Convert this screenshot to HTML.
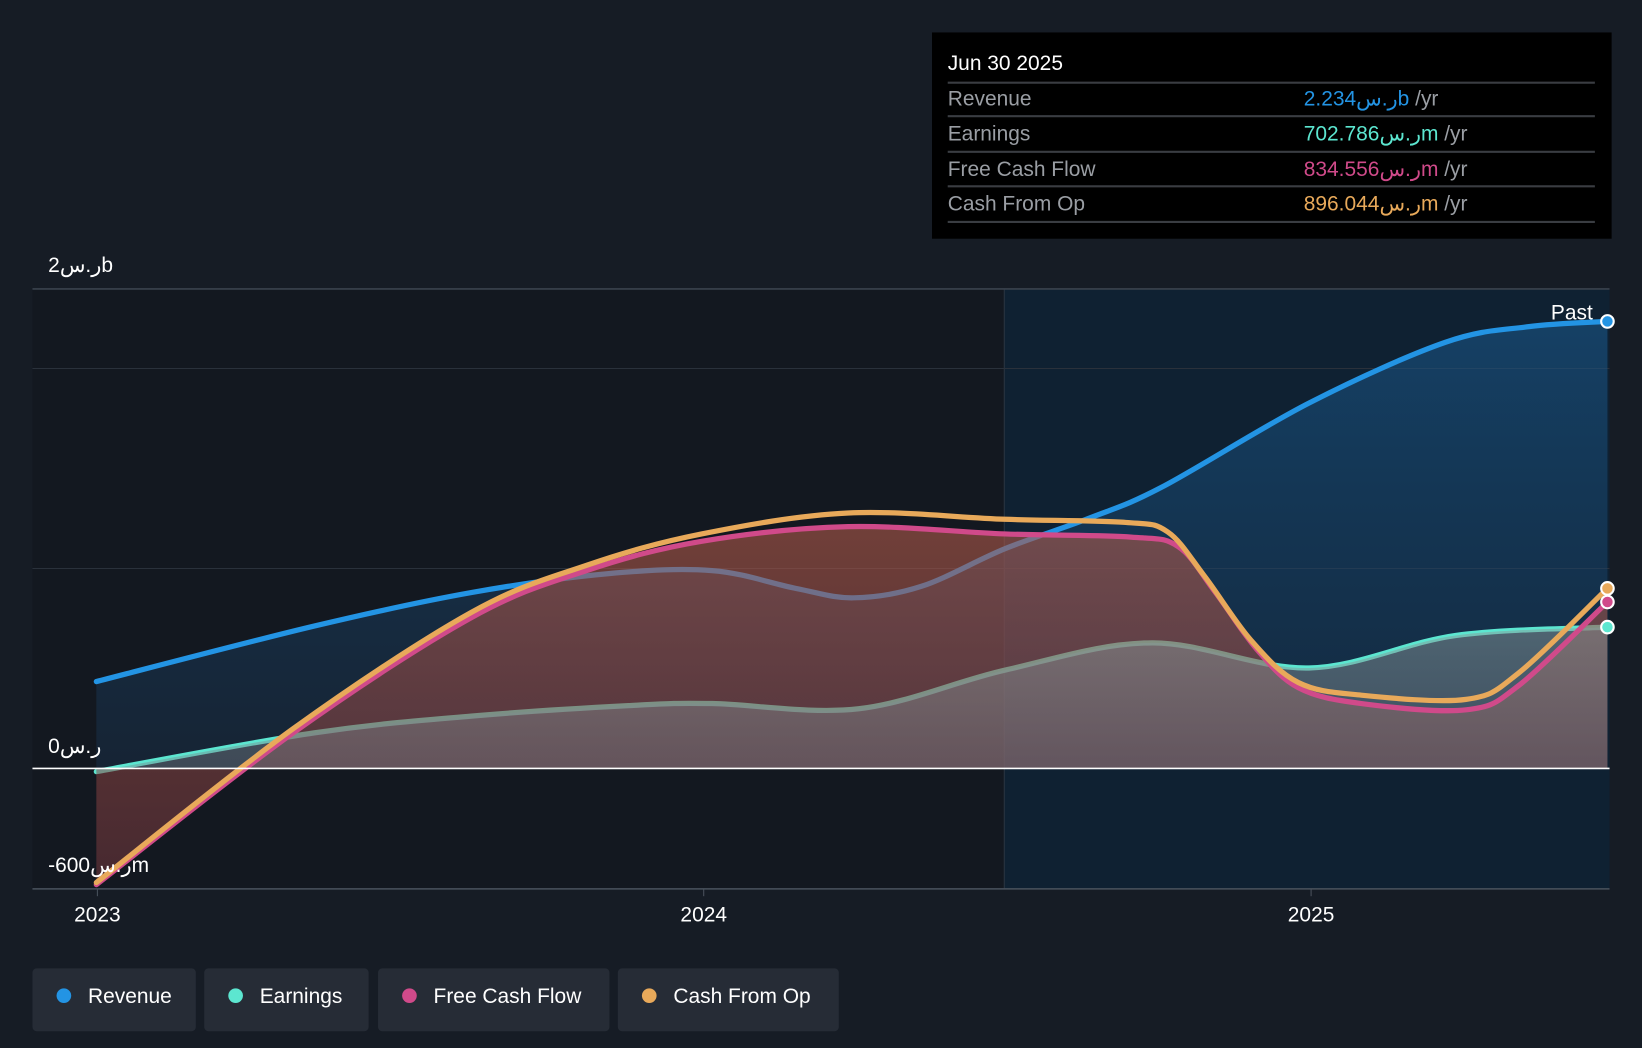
<!DOCTYPE html>
<html><head><meta charset="utf-8"><style>
html,body{margin:0;padding:0;background:#161c25;}
svg{display:block}
text{font-family:"Liberation Sans","Noto Sans CJK SC",sans-serif;}
</style></head><body>
<svg id="s" width="1642" height="1048" viewBox="0 0 1568 1001" preserveAspectRatio="none" xmlns="http://www.w3.org/2000/svg">
<defs>
<linearGradient id="rg" x1="0" y1="0" x2="0" y2="1"><stop offset="0" stop-color="#1a5a8f" stop-opacity="0.55"/><stop offset="1" stop-color="#1a3a5a" stop-opacity="0.35"/></linearGradient>
<linearGradient id="fg" x1="0" y1="0" x2="0" y2="1"><stop offset="0" stop-color="#b05a4a" stop-opacity="0.6"/><stop offset="1" stop-color="#7a3a40" stop-opacity="0.5"/></linearGradient>
<linearGradient id="eg" x1="0" y1="0" x2="0" y2="1"><stop offset="0" stop-color="#8a9a9a" stop-opacity="0.5"/><stop offset="1" stop-color="#7a8088" stop-opacity="0.4"/></linearGradient>
</defs>
<rect width="1568" height="1001" fill="#161c25"/>
<rect x="31" y="276" width="928" height="573" fill="#131820"/>
<rect x="959" y="276" width="578" height="573" fill="#0f2132"/>
<line x1="959" y1="276" x2="959" y2="849" stroke="#2a3440" stroke-width="1"/>
<line x1="31" y1="276" x2="1537" y2="276" stroke="#3a424d" stroke-width="1.5"/>
<line x1="31" y1="352" x2="1537" y2="352" stroke="#2a313b" stroke-width="1"/>
<line x1="31" y1="543" x2="1537" y2="543" stroke="#2a313b" stroke-width="1"/>
<g id="plot"></g>
<line x1="31" y1="734" x2="1537" y2="734" stroke="#ffffff" stroke-width="1.5"/>
<line x1="31" y1="849" x2="1537" y2="849" stroke="#4a525d" stroke-width="1.5"/>
<line x1="93" y1="849" x2="93" y2="856" stroke="#4a525d"/>
<line x1="672" y1="849" x2="672" y2="856" stroke="#4a525d"/>
<line x1="1252" y1="849" x2="1252" y2="856" stroke="#4a525d"/>
<g font-size="20" fill="#fff">
<text x="46" y="260">2ر.سb</text>
<text x="46" y="719">0ر.س</text>
<text x="46" y="833">-600ر.سm</text>
<text x="93" y="880" text-anchor="middle">2023</text>
<text x="672" y="880" text-anchor="middle">2024</text>
<text x="1252" y="880" text-anchor="middle">2025</text>
<text x="1521" y="305" text-anchor="end">Past</text>
</g>
<rect x="890" y="31" width="649" height="197" fill="#000"/>
<g stroke="#3a3d42" stroke-width="2"><line x1="905" y1="79" x2="1523" y2="79"/><line x1="905" y1="111" x2="1523" y2="111"/><line x1="905" y1="145" x2="1523" y2="145"/><line x1="905" y1="178" x2="1523" y2="178"/><line x1="905" y1="212" x2="1523" y2="212"/></g>
<g font-size="20">
<text x="905" y="67" fill="#fff">Jun 30 2025</text>
<text x="905" y="101" fill="#9a9ea4">Revenue</text>
<text x="905" y="134" fill="#9a9ea4">Earnings</text>
<text x="905" y="168" fill="#9a9ea4">Free Cash Flow</text>
<text x="905" y="201" fill="#9a9ea4">Cash From Op</text>
<text x="1245" y="101" fill="#2394e4">2.234ر.سb <tspan fill="#9a9ea4">/yr</tspan></text>
<text x="1245" y="134" fill="#5ce6d0">702.786ر.سm <tspan fill="#9a9ea4">/yr</tspan></text>
<text x="1245" y="168" fill="#d04a8a">834.556ر.سm <tspan fill="#9a9ea4">/yr</tspan></text>
<text x="1245" y="201" fill="#e8a95a">896.044ر.سm <tspan fill="#9a9ea4">/yr</tspan></text>
</g>
<g font-size="20" fill="#fff">
<rect x="31" y="925" width="156" height="60" rx="4" fill="#262c36"/><circle cx="61" cy="951" r="7" fill="#2394e4"/><text x="84" y="958">Revenue</text>
<rect x="195" y="925" width="157" height="60" rx="4" fill="#262c36"/><circle cx="225" cy="951" r="7" fill="#5ce6d0"/><text x="248" y="958">Earnings</text>
<rect x="361" y="925" width="221" height="60" rx="4" fill="#262c36"/><circle cx="391" cy="951" r="7" fill="#d04a8a"/><text x="414" y="958">Free Cash Flow</text>
<rect x="590" y="925" width="211" height="60" rx="4" fill="#262c36"/><circle cx="620" cy="951" r="7" fill="#e8a95a"/><text x="643" y="958">Cash From Op</text>
</g>
</svg>
<script>
function cr(p){var d="M"+p[0][0]+","+p[0][1];for(var i=0;i<p.length-1;i++){var a=p[i-1]||p[i],b=p[i],c=p[i+1],e=p[i+2]||c;var t=6;d+=" C"+(b[0]+(c[0]-a[0])/t)+","+(b[1]+(c[1]-a[1])/t)+" "+(c[0]-(e[0]-b[0])/t)+","+(c[1]-(e[1]-b[1])/t)+" "+c[0]+","+c[1];}return d;}
var rev=[[92,651],[300,598],[450,566],[580,548],[680,545],[760,562],[815,571],[880,560],[960,524],[1040,495],[1110,465],[1250,385],[1380,327],[1460,312],[1535,307]];
var ear=[[92,737],[300,700],[450,684],[600,674],[680,672],[820,677],[960,640],[1100,614],[1250,638],[1390,607],[1535,599]];
var fcf=[[92,845],[280,700],[450,590],[560,545],[670,517],[810,503],[960,510],[1080,513],[1125,522],[1160,565],[1200,620],[1240,657],[1300,672],[1400,678],[1450,655],[1535,575]];
var cfo=[[92,843],[280,696],[450,585],[560,540],[670,510],[810,490],[960,496],[1075,499],[1115,508],[1150,550],[1195,612],[1240,652],[1300,664],[1400,668],[1450,643],[1535,562]];
function area(p,f){return '<path d="'+cr(p)+' L1535,734 L92,734 Z" fill="'+f+'"/>';}
function line(p,c,w){return '<path d="'+cr(p)+'" fill="none" stroke="'+c+'" stroke-width="'+(w||5)+'" stroke-linejoin="round" stroke-linecap="round"/>';}
var h=area(rev,"url(#rg)")+line(rev,"#2394e4")+line(ear,"#5ce6d0")+area(fcf,"url(#fg)")+area(ear,"url(#eg)")+
line(fcf,"#d04a8a")+line(cfo,"#e8a95a")+
'<circle cx="1535" cy="307" r="6" fill="#2394e4" stroke="#fff" stroke-width="2"/>'+
'<circle cx="1535" cy="562" r="6" fill="#e8a95a" stroke="#fff" stroke-width="2"/>'+
'<circle cx="1535" cy="575" r="6" fill="#d04a8a" stroke="#fff" stroke-width="2"/>'+
'<circle cx="1535" cy="599" r="6" fill="#5ce6d0" stroke="#fff" stroke-width="2"/>';
document.getElementById("plot").innerHTML=h;
</script>
</body></html>
